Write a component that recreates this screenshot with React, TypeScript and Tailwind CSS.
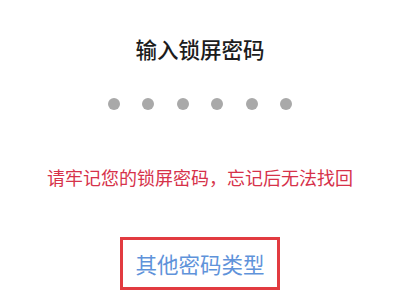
const FONT = { fontFamily: '"Noto Sans CJK SC", "Noto Sans", sans-serif' };

export default function App() {
  return (
    <div className="flex h-[300px] w-[400px] flex-col items-center bg-white pt-[35px]" style={FONT}>
      <h1 className="text-[21.5px] font-medium leading-[28px] text-[#1c1c1c]">输入锁屏密码</h1>
      <div className="mt-[35px] flex gap-[22.6px]">
        {[0, 1, 2, 3, 4, 5].map((i) => (
          <span key={i} className="h-3 w-3 rounded-full bg-[#a9a9a9]" />
        ))}
      </div>
      <p className="mt-[55px] text-[18px] leading-[24px] text-[#d6324a]">请牢记您的锁屏密码，忘记后无法找回</p>
      <button className="mt-[48px] flex h-[53px] w-[160px] items-center justify-center border-[3px] border-[#e23b40] text-[21.5px] leading-[28px] text-[#5f93da]">
        其他密码类型
      </button>
    </div>
  );
}
